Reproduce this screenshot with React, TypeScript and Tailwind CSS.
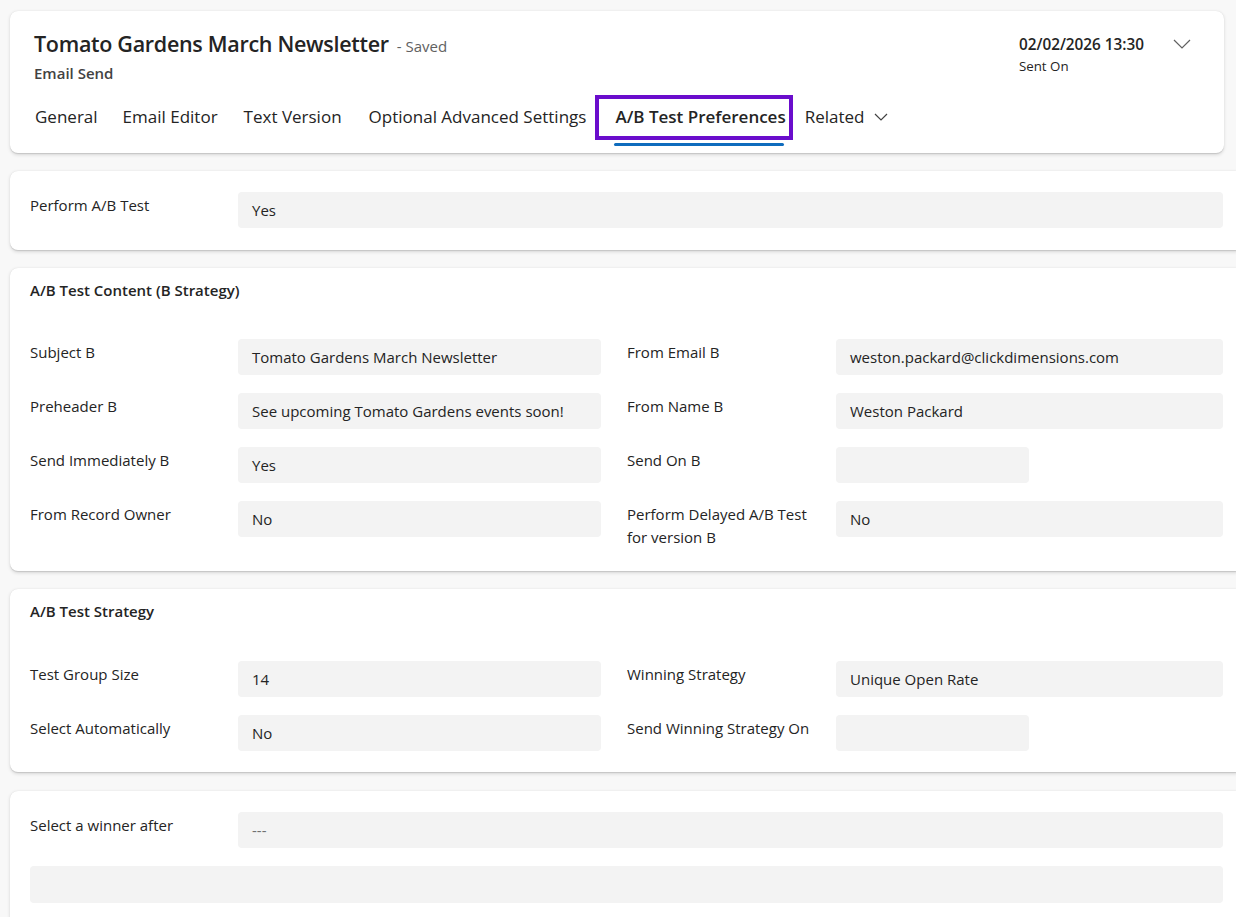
import React from "react";

const font = { fontFamily: '"Open Sans", "Noto Sans", sans-serif' };

function Field({ value, short, muted }: { value?: string; short?: boolean; muted?: boolean }) {
  return (
    <div
      className={`h-[36px] rounded-[4px] bg-[#f3f3f3] flex items-center px-[14px] pt-[1px] text-[15px] ${
        muted ? "text-[#707070]" : "text-[#242424]"
      } ${short ? "w-[193px]" : "flex-1"}`}
    >
      {value}
    </div>
  );
}

function Row({ label, value, short, muted, labelW = 208 }: { label: string; value?: string; short?: boolean; muted?: boolean; labelW?: number }) {
  return (
    <div className="flex items-start">
      <div className="text-[15px] leading-[23px] text-[#242424] pt-[2px] pr-[14px]" style={{ width: labelW }}>
        {label}
      </div>
      <div className="flex-1 flex">
        <Field value={value} short={short} muted={muted} />
      </div>
    </div>
  );
}

function Card({ children, className = "" }: { children: React.ReactNode; className?: string }) {
  return (
    <div
      className={`ml-[10px] w-[1233px] bg-white rounded-[8px] shadow-[0_1.6px_3.6px_rgba(0,0,0,0.13),0_0.3px_0.9px_rgba(0,0,0,0.11)] px-[20px] ${className}`}
    >
      {children}
    </div>
  );
}

function TwoCol({ rows }: { rows: [any, any][] }) {
  return (
    <div className="flex flex-col gap-[18px]">
      {rows.map(([l, r], i) => (
        <div key={i} className="flex gap-[26px]">
          <div className="w-[571px]">
            <Row {...l} />
          </div>
          <div className="w-[596px]">
            <Row {...r} labelW={209} />
          </div>
        </div>
      ))}
    </div>
  );
}

export default function App() {
  return (
    <div className="w-[1236px] h-[917px] overflow-hidden bg-[#f8f8f8]" style={font}>
      <div className="pt-[11px]">
        {/* Header */}
        <div className="ml-[10px] w-[1214px] h-[142px] bg-white rounded-[8px] shadow-[0_1.6px_3.6px_rgba(0,0,0,0.13),0_0.3px_0.9px_rgba(0,0,0,0.11)] px-[24px] pt-[19px]">
          <div className="flex justify-between">
            <div>
              <div className="flex items-baseline">
                <span className="text-[21.5px] font-semibold text-[#242424] leading-[28px] tracking-[-0.3px]">Tomato Gardens March Newsletter</span>
                <span className="ml-[8px] text-[15px] text-[#616161]">- Saved</span>
              </div>
              <div className="text-[15px] font-semibold text-[#424242] leading-[20px] mt-[5px]">Email Send</div>
            </div>
            <div className="flex items-start pt-[4px] pr-[8px]">
              <div className="mr-[28px]">
                <div className="text-[15.3px] font-semibold text-[#242424] leading-[20px]">02/02/2026 13:30</div>
                <div className="text-[13.3px] text-[#242424] leading-[16px] mt-[4px]">Sent On</div>
              </div>
              <svg width="20" height="20" viewBox="0 0 20 20">
                <path d="M2 6 L10 14 L18 6" fill="none" stroke="#616161" strokeWidth="1.2" />
              </svg>
            </div>
          </div>
          <div className="flex items-center mt-[11px] h-[46px] text-[17px] text-[#242424]">
            <div className="ml-[1px]">General</div>
            <div className="ml-[25px]">Email Editor</div>
            <div className="ml-[26px]">Text Version</div>
            <div className="ml-[27px]">Optional Advanced Settings</div>
            <div className="relative ml-[9px]">
              <div className="border-[4px] border-[#6a0dcc] h-[45px] pl-[16px] pr-[3px] flex items-center font-semibold">
                A/B Test Preferences
              </div>
              <div className="absolute left-[19px] right-[9px] bottom-[-6px] h-[3px] rounded-[2px] bg-[#0f6cbd]" />
            </div>
            <div className="flex items-center ml-[12px]">
              Related
              <svg width="14" height="14" viewBox="0 0 14 14" className="ml-[9px]">
                <path d="M1 4 L7 10 L13 4" fill="none" stroke="#424242" strokeWidth="1.2" />
              </svg>
            </div>
          </div>
        </div>

        {/* Card 1 */}
        <Card className="mt-[18px] h-[79px] pt-[21px]">
          <div className="w-[1193px]">
            <Row label="Perform A/B Test" value="Yes" />
          </div>
        </Card>

        {/* Card 2 */}
        <Card className="mt-[18px] h-[303px] pt-[11px]">
          <div className="text-[15px] font-semibold text-[#242424] leading-[20px] h-[60px] pt-[1px]">A/B Test Content (B Strategy)</div>
          <TwoCol
            rows={[
              [{ label: "Subject B", value: "Tomato Gardens March Newsletter" }, { label: "From Email B", value: "weston.packard@clickdimensions.com" }],
              [{ label: "Preheader B", value: "See upcoming Tomato Gardens events soon!" }, { label: "From Name B", value: "Weston Packard" }],
              [{ label: "Send Immediately B", value: "Yes" }, { label: "Send On B", value: "", short: true }],
              [{ label: "From Record Owner", value: "No" }, { label: "Perform Delayed A/B Test for version B", value: "No" }],
            ]}
          />
        </Card>

        {/* Card 3 */}
        <Card className="mt-[18px] h-[183px] pt-[11px]">
          <div className="text-[15px] font-semibold text-[#242424] leading-[20px] h-[61px] pt-[1px]">A/B Test Strategy</div>
          <TwoCol
            rows={[
              [{ label: "Test Group Size", value: "14" }, { label: "Winning Strategy", value: "Unique Open Rate" }],
              [{ label: "Select Automatically", value: "No" }, { label: "Send Winning Strategy On", value: "", short: true }],
            ]}
          />
        </Card>

        {/* Card 4 */}
        <Card className="mt-[19px] h-[160px] pt-[21px]">
          <div className="w-[1193px] flex flex-col gap-[18px]">
            <Row label="Select a winner after" value="---" muted />
            <div className="h-[37px] rounded-[4px] bg-[#f3f3f3]" />
          </div>
        </Card>
      </div>
    </div>
  );
}
